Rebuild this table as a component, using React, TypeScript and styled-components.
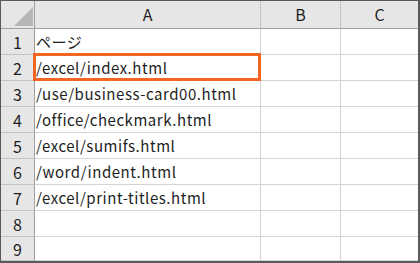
import React, { FC } from 'react';
import styled, { createGlobalStyle } from 'styled-components';

const GlobalStyle = createGlobalStyle`
  html, body {
    margin: 0;
    padding: 0;
    background: #ffffff;
  }
`;

const rows: string[] = [
  'ページ',
  '/excel/index.html',
  '/use/business-card00.html',
  '/office/checkmark.html',
  '/excel/sumifs.html',
  '/word/indent.html',
  '/excel/print-titles.html',
  '',
  '',
];

const Sheet = styled.div`
  width: 420px;
  height: 263px;
  box-sizing: border-box;
  border-style: solid;
  border-color: #5a5a5a;
  border-width: 1px 2px 2px 1px;
  overflow: hidden;
  display: grid;
  grid-template-columns: 34px 226px 80px 77px;
  grid-template-rows: 28px repeat(8, 26px) 24px;
  font-family: 'Noto Sans CJK JP', 'Noto Sans', sans-serif;
  color: #1e1e1e;
  background: #ffffff;
`;

const Corner = styled.div`
  background: #e6e6e6;
  border-right: 1px solid #9f9f9f;
  border-bottom: 1px solid #9f9f9f;
  display: flex;
  align-items: flex-end;
  justify-content: flex-end;
  padding: 0 1px 2px 0;
  box-sizing: border-box;
`;

const ColHead = styled.div<{ last?: boolean }>`
  background: #e6e6e6;
  border-right: ${(p) => (p.last ? 'none' : '1px solid #c4c4c4')};
  border-bottom: 1px solid #9f9f9f;
  display: flex;
  align-items: center;
  justify-content: center;
  font-size: 16px;
  padding-bottom: 1px;
  box-sizing: border-box;
`;

const RowHead = styled.div`
  background: #e6e6e6;
  border-right: 1px solid #9f9f9f;
  border-bottom: 1px solid #c4c4c4;
  display: flex;
  align-items: center;
  justify-content: center;
  font-size: 16px;
  box-sizing: border-box;
`;

const Cell = styled.div<{ last?: boolean }>`
  position: relative;
  border-right: ${(p) => (p.last ? 'none' : '1px solid #d4d4d4')};
  border-bottom: 1px solid #d4d4d4;
  display: flex;
  align-items: center;
  padding: 0 0 1px 1px;
  font-size: 15px;
  letter-spacing: 0.55px;
  white-space: nowrap;
  box-sizing: border-box;
`;

const Selection = styled.div`
  position: absolute;
  top: -2px;
  left: -2px;
  right: -1px;
  bottom: -1px;
  border: 3px solid #f26522;
  pointer-events: none;
`;

const App: FC = () => {
  return (
    <>
      <GlobalStyle />
      <Sheet>
        <Corner>
          <svg width="19" height="19" viewBox="0 0 19 19">
            <polygon points="19,0 19,19 0,19" fill="#b6b6b6" />
          </svg>
        </Corner>
        <ColHead>A</ColHead>
        <ColHead>B</ColHead>
        <ColHead last>C</ColHead>
        {rows.map((text, i) => (
          <React.Fragment key={i}>
            <RowHead>{i + 1}</RowHead>
            <Cell>
              {text}
              {i === 1 && <Selection />}
            </Cell>
            <Cell />
            <Cell last />
          </React.Fragment>
        ))}
      </Sheet>
    </>
  );
};

export default App;
